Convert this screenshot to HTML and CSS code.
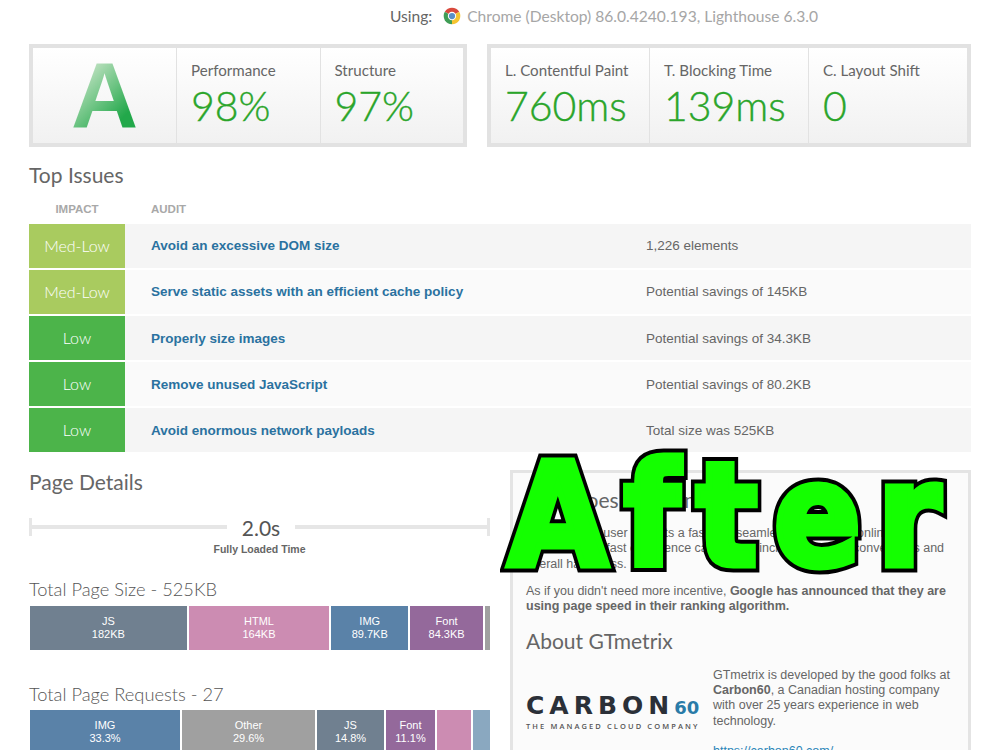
FILE: index.html
```html
<!DOCTYPE html>
<html lang="en">

<head>
    <meta charset="UTF-8">
    <meta name="viewport" content="width=device-width, initial-scale=1.0">
    <title>GTmetrix Report</title>
    <link rel="stylesheet" href="styles.css">
</head>

<body>
    <div class="page">
        <div class="using">
            <span class="using-label">Using:</span>
            <svg class="chrome" viewBox="0 0 48 48" width="20" height="20">
                <path d="M24 24 L6.7 14 A20 20 0 0 1 41.3 14 Z" fill="#d9493c"/>
                <path d="M24 24 L41.3 14 A20 20 0 0 1 24 44 Z" fill="#f5c431"/>
                <path d="M24 24 L24 44 A20 20 0 0 1 6.7 14 Z" fill="#3f9d55"/>
                <circle cx="24" cy="24" r="10" fill="#fff"/>
                <circle cx="24" cy="24" r="7.5" fill="#5a8fc8"/>
            </svg>
            <span>Chrome (Desktop) 86.0.4240.193, Lighthouse 6.3.0</span>
        </div>

        <div class="scores">
            <div class="score-box score-left">
                <div class="grade"><span class="grade-letter">A</span></div>
                <div class="metric">
                    <div class="metric-label">Performance</div>
                    <div class="metric-value">98%</div>
                </div>
                <div class="metric">
                    <div class="metric-label">Structure</div>
                    <div class="metric-value">97%</div>
                </div>
            </div>
            <div class="score-box score-right">
                <div class="metric">
                    <div class="metric-label">L. Contentful Paint</div>
                    <div class="metric-value">760ms</div>
                </div>
                <div class="metric">
                    <div class="metric-label">T. Blocking Time</div>
                    <div class="metric-value">139ms</div>
                </div>
                <div class="metric">
                    <div class="metric-label">C. Layout Shift</div>
                    <div class="metric-value">0</div>
                </div>
            </div>
        </div>

        <h2 class="section-title issues-title">Top Issues</h2>
        <div class="issues-head">
            <div class="col-impact">IMPACT</div>
            <div class="col-audit">AUDIT</div>
        </div>
        <div class="issues">
            <div class="issue">
                <div class="impact med-low">Med-Low</div>
                <a class="audit" href="#">Avoid an excessive DOM size</a>
                <div class="result">1,226 elements</div>
            </div>
            <div class="issue">
                <div class="impact med-low">Med-Low</div>
                <a class="audit" href="#">Serve static assets with an efficient cache policy</a>
                <div class="result">Potential savings of 145KB</div>
            </div>
            <div class="issue">
                <div class="impact low">Low</div>
                <a class="audit" href="#">Properly size images</a>
                <div class="result">Potential savings of 34.3KB</div>
            </div>
            <div class="issue">
                <div class="impact low">Low</div>
                <a class="audit" href="#">Remove unused JavaScript</a>
                <div class="result">Potential savings of 80.2KB</div>
            </div>
            <div class="issue">
                <div class="impact low">Low</div>
                <a class="audit" href="#">Avoid enormous network payloads</a>
                <div class="result">Total size was 525KB</div>
            </div>
        </div>

        <div class="lower">
            <div class="details">
                <h2 class="section-title details-title">Page Details</h2>
                <div class="loaded">
                    <div class="loaded-line">
                        <span class="rule rule-start"></span>
                        <span class="loaded-time">2.0s</span>
                        <span class="rule rule-end"></span>
                    </div>
                    <div class="loaded-label">Fully Loaded Time</div>
                </div>

                <h3 class="bar-title">Total Page Size - 525KB</h3>
                <div class="bar">
                    <div class="seg js" style="width:157px">JS<br>182KB</div>
                    <div class="seg html" style="width:141px">HTML<br>164KB</div>
                    <div class="seg img" style="width:77px">IMG<br>89.7KB</div>
                    <div class="seg font" style="width:73px">Font<br>84.3KB</div>
                    <div class="seg other" style="width:5px"></div>
                </div>

                <h3 class="bar-title requests-title">Total Page Requests - 27</h3>
                <div class="bar">
                    <div class="seg img" style="width:150px">IMG<br>33.3%</div>
                    <div class="seg other" style="width:133px">Other<br>29.6%</div>
                    <div class="seg js" style="width:67px">JS<br>14.8%</div>
                    <div class="seg font" style="width:49px">Font<br>11.1%</div>
                    <div class="seg html" style="width:34px"></div>
                    <div class="seg css" style="width:17px"></div>
                </div>
            </div>

            <div class="about">
                <h2 class="about-title">Why does speed matter?</h2>
                <p>Your average user expects a fast and seamless experience online.<br>Additionally, a fast experience can lead to increased sales, conversions and overall happiness.</p>
                <p>As if you didn't need more incentive, <b>Google has announced that they are using page speed in their ranking algorithm.</b></p>
                <h2 class="about-title gt-title">About GTmetrix</h2>
                <div class="carbon">
                    <div class="carbon-logo">
                        <div class="carbon-name">CARBON<span class="carbon-num">60</span></div>
                        <div class="carbon-tag">THE MANAGED CLOUD COMPANY</div>
                    </div>
                    <div class="carbon-text">
                        <p>GTmetrix is developed by the good folks at <b>Carbon60</b>, a Canadian hosting company with over 25 years experience in web technology.</p>
                        <a href="#">https://carbon60.com/</a>
                    </div>
                </div>
            </div>
        </div>

        <div class="stamp" data-text="After">After</div>
    </div>
</body>

</html>
```

FILE: styles.css
```css
html, body {
    margin: 0;
    padding: 0;
    background-color: #fff;
}

.page {
    position: relative;
    width: 942px;
    height: 750px;
    padding: 0 29px;
    overflow: hidden;
    font-family: "Liberation Sans", Arial, sans-serif;
    color: #666;
}

/* top line */
.using {
    display: flex;
    align-items: center;
    justify-content: flex-end;
    height: 32px;
    padding-right: 153px;
    font-family: Lato, sans-serif;
    font-size: 15.6px;
    color: #a6a6a6;
}

.using-label {
    color: #666;
    margin-right: 10px;
}

.chrome {
    margin-right: 5px;
}

/* score boxes */
.scores {
    display: flex;
    justify-content: space-between;
    margin-top: 12px;
}

.score-box {
    display: flex;
    height: 95px;
    border: 4px solid #e2e2e2;
    background: linear-gradient(#fff, #f1f1f1);
}

.score-left {
    width: 430px;
}

.score-right {
    width: 476px;
}

.grade {
    width: 143px;
    display: flex;
    align-items: center;
    justify-content: center;
    border-right: 1px solid #e2e2e2;
}

.grade-letter {
    font-size: 93px;
    line-height: 95px;
    font-weight: bold;
    background: linear-gradient(135deg, #d5ead2 15%, #22a84a 75%);
    -webkit-background-clip: text;
    background-clip: text;
    color: transparent;
}

.metric {
    flex: 1;
    padding: 11px 0 0 14px;
    border-right: 1px solid #e2e2e2;
    font-family: Lato, sans-serif;
}

.metric:last-child {
    border-right: none;
}

.metric-label {
    font-size: 15.1px;
    line-height: 22px;
    color: #666;
}

.metric-value {
    font-size: 41px;
    line-height: 49px;
    font-weight: 300;
    color: #2aa52a;
    -webkit-text-stroke: 0.4px #2aa52a;
}

/* headings */
.section-title {
    margin: 0;
    font-family: Lato, sans-serif;
    font-weight: 400;
    font-size: 21px;
    line-height: 28px;
    color: #666;
}

.issues-title {
    margin-top: 14px;
}

/* issues table */
.issues-head {
    display: flex;
    height: 35px;
    padding-top: 4px;
    box-sizing: border-box;
    align-items: center;
    font-size: 11.5px;
    font-weight: bold;
    color: #a8a8a8;
}

.col-impact {
    width: 96px;
    text-align: center;
}

.col-audit {
    padding-left: 26px;
}

.issues {
    display: flex;
    flex-direction: column;
    gap: 2px;
}

.issue {
    display: flex;
    align-items: center;
    height: 44px;
    background-color: #f5f5f5;
    font-size: 13.5px;
}

.issue:nth-child(even) {
    background-color: #fafafa;
}

.impact {
    width: 96px;
    height: 44px;
    margin-right: 26px;
    line-height: 44px;
    text-align: center;
    font-family: Lato, sans-serif;
    font-size: 16px;
    font-weight: 300;
    color: #fff;
}

.med-low {
    background-color: #a9cb5f;
}

.low {
    background-color: #4cb44a;
}

.audit {
    width: 495px;
    margin-bottom: 1px;
    font-weight: bold;
    color: #2a72a0;
    text-decoration: none;
}

.result {
    margin-bottom: 1px;
    color: #666;
}

.low ~ .audit,
.low ~ .result {
    margin-bottom: 0;
}

/* lower half */
.lower {
    display: flex;
    justify-content: space-between;
    margin-top: 18px;
}

.details {
    width: 461px;
}

.details-title {
    margin-top: -2px;
}

.loaded {
    margin-top: 17px;
}

.loaded-line {
    display: flex;
    align-items: center;
    height: 28px;
}

.rule {
    flex: 1;
    height: 4px;
    background-color: #e6e6e6;
    position: relative;
}

.rule-start {
    border-left: 3px solid #e6e6e6;
}

.rule-start::before,
.rule-end::after {
    content: "";
    position: absolute;
    top: -7px;
    width: 3px;
    height: 18px;
    background-color: #e6e6e6;
}

.rule-start::before {
    left: -3px;
}

.rule-end::after {
    right: 0;
}

.loaded-time {
    width: 68px;
    text-align: center;
    font-family: Lato, sans-serif;
    font-size: 21px;
    color: #555;
}

.loaded-label {
    margin-top: 2px;
    text-align: center;
    font-size: 10.5px;
    font-weight: bold;
    color: #666;
}

.bar-title {
    margin: 22px 0 5px;
    font-family: Lato, sans-serif;
    font-weight: 300;
    font-size: 18.3px;
    line-height: 24px;
    color: #555;
}

.requests-title {
    margin: 32px 0 4px;
}

.bar {
    display: flex;
    gap: 2px;
    height: 44px;
    padding-left: 1px;
}

.seg {
    padding-top: 9px;
    box-sizing: border-box;
    font-size: 11px;
    line-height: 12.5px;
    text-align: center;
    color: #fff;
}

.js { background-color: #708090; }
.html { background-color: #cc8cb2; }
.img { background-color: #5a82a8; }
.font { background-color: #94699b; }
.other { background-color: #a0a0a0; }
.css { background-color: #8aa8c0; }

/* right column */
.about {
    box-sizing: border-box;
    width: 461px;
    height: 290px;
    padding: 14px 13px 0;
    border: 3px solid #e4e4e4;
    border-bottom: none;
    background-color: #fbfbfb;
    font-size: 12.5px;
    line-height: 15.4px;
}

.about p {
    margin: 0 0 11.5px;
}

.about .carbon-text p {
    margin-bottom: 15px;
}

.about-title {
    margin: 0 0 13px;
    font-family: Lato, sans-serif;
    font-weight: 400;
    font-size: 21px;
    line-height: 26px;
    color: #666;
}

.gt-title {
    margin-top: 13px;
    margin-bottom: 14px;
}

.carbon {
    display: flex;
    align-items: flex-start;
}

.carbon-logo {
    width: 187px;
    flex: none;
    padding-top: 27px;
}

.carbon-name {
    font-family: "DejaVu Sans", sans-serif;
    font-weight: 700;
    font-size: 25px;
    line-height: 22px;
    letter-spacing: 5px;
    color: #2b3038;
    white-space: nowrap;
}

.carbon-num {
    font-size: 18px;
    letter-spacing: 0;
    color: #2a7ba8;
}

.carbon-tag {
    font-family: "Open Sans", sans-serif;
    font-size: 7.5px;
    font-weight: 600;
    letter-spacing: 2.1px;
    color: #555;
    white-space: nowrap;
}

.carbon-text a {
    color: #2a85b8;
    text-decoration: none;
}

/* big label laid over the page */
.stamp {
    position: absolute;
    z-index: 1;
    left: 508px;
    top: 426px;
    font-family: "DejaVu Sans", sans-serif;
    font-weight: bold;
    font-size: 143px;
    line-height: 180px;
    letter-spacing: 18px;
    color: #14ff00;
    -webkit-text-stroke: 7px #14ff00;
    transform: scaleX(0.9);
    transform-origin: left top;
}

.stamp::before {
    content: attr(data-text);
    position: absolute;
    left: 0;
    top: 0;
    z-index: -1;
    color: #000;
    -webkit-text-stroke: 15px #000;
}
```
